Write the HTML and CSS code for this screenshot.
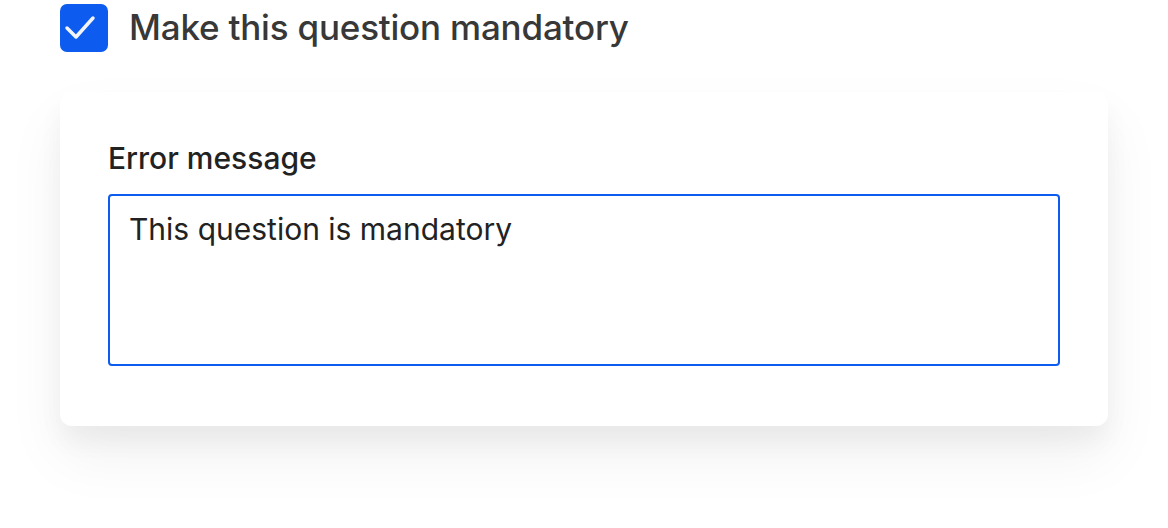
FILE: index.html
```html
<!DOCTYPE html>
<html lang="en">
<head>
    <meta charset="UTF-8">
    <meta name="viewport" content="width=device-width, initial-scale=1.0">
    <title>Question settings</title>
    <link rel="stylesheet" href="styles.css">
</head>
<body>
    <label class="mandatory">
        <span class="check">
            <svg width="48" height="48" viewBox="0 0 48 48">
                <path d="M7 24 L16 33 L33 14" fill="none" stroke="#f2f4f8" stroke-width="3.5" stroke-linecap="round" stroke-linejoin="round"/>
            </svg>
        </span>
        <span class="mandatory-text">Make this question mandatory</span>
    </label>

    <div class="card">
        <div class="field-label">Error message</div>
        <div class="message-box">This question is mandatory</div>
    </div>
</body>
</html>
```

FILE: styles.css
```css
body {
    margin: 0;
    padding: 4px 60px 102px 60px;
    font-family: Inter, "Noto Sans", sans-serif;
    background: #fff;
    width: 1048px;
}
.mandatory {
    display: flex;
    align-items: center;
    gap: 21px;
    height: 48px;
}
.check {
    width: 48px;
    height: 48px;
    border-radius: 7px;
    background: #0d5cef;
    display: block;
}
.check svg {
    display: block;
}
.mandatory-text {
    font-size: 35px;
    font-weight: 500;
    color: #383838;
    letter-spacing: -0.2px;
    margin-top: -2px;
}
.card {
    margin-top: 40px;
    background: #fff;
    border-radius: 12px;
    padding: 48px 48px 60px 48px;
    box-shadow: 0 16px 24px rgba(0, 0, 0, 0.045), 0 30px 60px rgba(0, 0, 0, 0.06);
}
.field-label {
    font-size: 30px;
    line-height: 36px;
    font-weight: 500;
    color: #222;
    margin-bottom: 18px;
}
.message-box {
    height: 172px;
    border: 2px solid #0d5cef;
    border-radius: 4px;
    padding: 15px 19px 14px;
    box-sizing: border-box;
    font-size: 30px;
    line-height: 36px;
    color: #222;
}
```
